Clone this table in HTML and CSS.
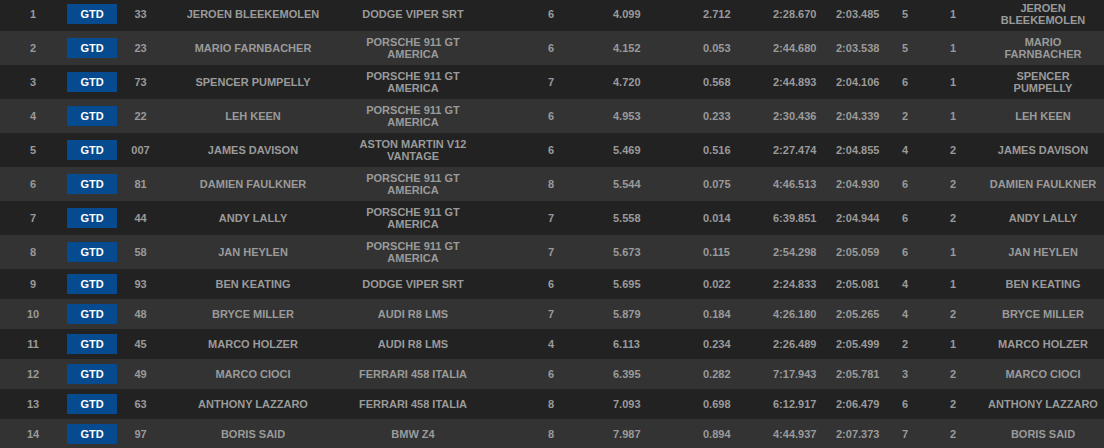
FILE: index.html
```html
<!DOCTYPE html>
<html>
<head>
<meta charset="utf-8">
<link rel="stylesheet" href="styles.css">
</head>
<body>
<table class="results">
<colgroup>
<col class="c-pos"><col class="c-cls"><col class="c-num"><col class="c-drv"><col class="c-car"><col class="c-laps"><col class="c-beh"><col class="c-gap"><col class="c-last"><col class="c-best"><col class="c-bl"><col class="c-pit"><col class="c-fd">
</colgroup>
<tbody>
<tr><td>1</td><td><span class="badge">GTD</span></td><td>33</td><td>JEROEN BLEEKEMOLEN</td><td class="car">DODGE VIPER SRT</td><td class="laps">6</td><td class="l">4.099</td><td class="l">2.712</td><td class="l">2:28.670</td><td class="l">2:03.485</td><td class="l">5</td><td class="l">1</td><td class="fd">JEROEN BLEEKEMOLEN</td></tr>
<tr><td>2</td><td><span class="badge">GTD</span></td><td>23</td><td>MARIO FARNBACHER</td><td class="car">PORSCHE 911 GT AMERICA</td><td class="laps">6</td><td class="l">4.152</td><td class="l">0.053</td><td class="l">2:44.680</td><td class="l">2:03.538</td><td class="l">5</td><td class="l">1</td><td class="fd">MARIO FARNBACHER</td></tr>
<tr><td>3</td><td><span class="badge">GTD</span></td><td>73</td><td>SPENCER PUMPELLY</td><td class="car">PORSCHE 911 GT AMERICA</td><td class="laps">7</td><td class="l">4.720</td><td class="l">0.568</td><td class="l">2:44.893</td><td class="l">2:04.106</td><td class="l">6</td><td class="l">1</td><td class="fd">SPENCER PUMPELLY</td></tr>
<tr><td>4</td><td><span class="badge">GTD</span></td><td>22</td><td>LEH KEEN</td><td class="car">PORSCHE 911 GT AMERICA</td><td class="laps">6</td><td class="l">4.953</td><td class="l">0.233</td><td class="l">2:30.436</td><td class="l">2:04.339</td><td class="l">2</td><td class="l">1</td><td class="fd">LEH KEEN</td></tr>
<tr><td>5</td><td><span class="badge">GTD</span></td><td>007</td><td>JAMES DAVISON</td><td class="car">ASTON MARTIN V12 VANTAGE</td><td class="laps">6</td><td class="l">5.469</td><td class="l">0.516</td><td class="l">2:27.474</td><td class="l">2:04.855</td><td class="l">4</td><td class="l">2</td><td class="fd">JAMES DAVISON</td></tr>
<tr><td>6</td><td><span class="badge">GTD</span></td><td>81</td><td>DAMIEN FAULKNER</td><td class="car">PORSCHE 911 GT AMERICA</td><td class="laps">8</td><td class="l">5.544</td><td class="l">0.075</td><td class="l">4:46.513</td><td class="l">2:04.930</td><td class="l">6</td><td class="l">2</td><td class="fd">DAMIEN FAULKNER</td></tr>
<tr><td>7</td><td><span class="badge">GTD</span></td><td>44</td><td>ANDY LALLY</td><td class="car">PORSCHE 911 GT AMERICA</td><td class="laps">7</td><td class="l">5.558</td><td class="l">0.014</td><td class="l">6:39.851</td><td class="l">2:04.944</td><td class="l">6</td><td class="l">2</td><td class="fd">ANDY LALLY</td></tr>
<tr><td>8</td><td><span class="badge">GTD</span></td><td>58</td><td>JAN HEYLEN</td><td class="car">PORSCHE 911 GT AMERICA</td><td class="laps">7</td><td class="l">5.673</td><td class="l">0.115</td><td class="l">2:54.298</td><td class="l">2:05.059</td><td class="l">6</td><td class="l">1</td><td class="fd">JAN HEYLEN</td></tr>
<tr><td>9</td><td><span class="badge">GTD</span></td><td>93</td><td>BEN KEATING</td><td class="car">DODGE VIPER SRT</td><td class="laps">6</td><td class="l">5.695</td><td class="l">0.022</td><td class="l">2:24.833</td><td class="l">2:05.081</td><td class="l">4</td><td class="l">1</td><td class="fd">BEN KEATING</td></tr>
<tr><td>10</td><td><span class="badge">GTD</span></td><td>48</td><td>BRYCE MILLER</td><td class="car">AUDI R8 LMS</td><td class="laps">7</td><td class="l">5.879</td><td class="l">0.184</td><td class="l">4:26.180</td><td class="l">2:05.265</td><td class="l">4</td><td class="l">2</td><td class="fd">BRYCE MILLER</td></tr>
<tr><td>11</td><td><span class="badge">GTD</span></td><td>45</td><td>MARCO HOLZER</td><td class="car">AUDI R8 LMS</td><td class="laps">4</td><td class="l">6.113</td><td class="l">0.234</td><td class="l">2:26.489</td><td class="l">2:05.499</td><td class="l">2</td><td class="l">1</td><td class="fd">MARCO HOLZER</td></tr>
<tr><td>12</td><td><span class="badge">GTD</span></td><td>49</td><td>MARCO CIOCI</td><td class="car">FERRARI 458 ITALIA</td><td class="laps">6</td><td class="l">6.395</td><td class="l">0.282</td><td class="l">7:17.943</td><td class="l">2:05.781</td><td class="l">3</td><td class="l">2</td><td class="fd">MARCO CIOCI</td></tr>
<tr><td>13</td><td><span class="badge">GTD</span></td><td>63</td><td>ANTHONY LAZZARO</td><td class="car">FERRARI 458 ITALIA</td><td class="laps">8</td><td class="l">7.093</td><td class="l">0.698</td><td class="l">6:12.917</td><td class="l">2:06.479</td><td class="l">6</td><td class="l">2</td><td class="fd">ANTHONY LAZZARO</td></tr>
<tr><td>14</td><td><span class="badge">GTD</span></td><td>97</td><td>BORIS SAID</td><td class="car">BMW Z4</td><td class="laps">8</td><td class="l">7.987</td><td class="l">0.894</td><td class="l">4:44.937</td><td class="l">2:07.373</td><td class="l">7</td><td class="l">2</td><td class="fd">BORIS SAID</td></tr>
</tbody>
</table>
</body>
</html>
```

FILE: styles.css
```css
html, body {
  margin: 0;
  padding: 0;
  background: #222222;
}
body {
  font-family: "Liberation Sans", Arial, Helvetica, sans-serif;
  font-size: 11px;
  font-weight: bold;
  color: #9a9a9a;
  overflow: hidden;
}
.results {
  width: 1104px;
  table-layout: fixed;
  border-collapse: collapse;
  border-spacing: 0;
  margin-top: -3px;
}
.c-pos { width: 66px; }
.c-cls { width: 52px; }
.c-num { width: 45px; }
.c-drv { width: 180px; }
.c-car { width: 140px; }
.c-laps { width: 122px; }
.c-beh { width: 90px; }
.c-gap { width: 70px; }
.c-last { width: 63px; }
.c-best { width: 66px; }
.c-bl { width: 48px; }
.c-pit { width: 40px; }
.c-fd { width: 122px; }
.results tr:nth-child(odd) { background: #222222; }
.results tr:nth-child(even) { background: #333333; }
.results td {
  padding: 5px 0;
  line-height: 12px;
  text-align: center;
  vertical-align: middle;
}
.results td.car { padding: 5px 5px; }
.results td.fd { padding: 5px 5px; }
.results td.laps { text-align: left; padding-left: 65px; }
.results td.l { text-align: left; padding-left: 8px; }
.badge {
  display: inline-block;
  width: 50px;
  height: 20px;
  line-height: 20px;
  background: #064b8f;
  color: #ffffff;
  vertical-align: middle;
}
```
